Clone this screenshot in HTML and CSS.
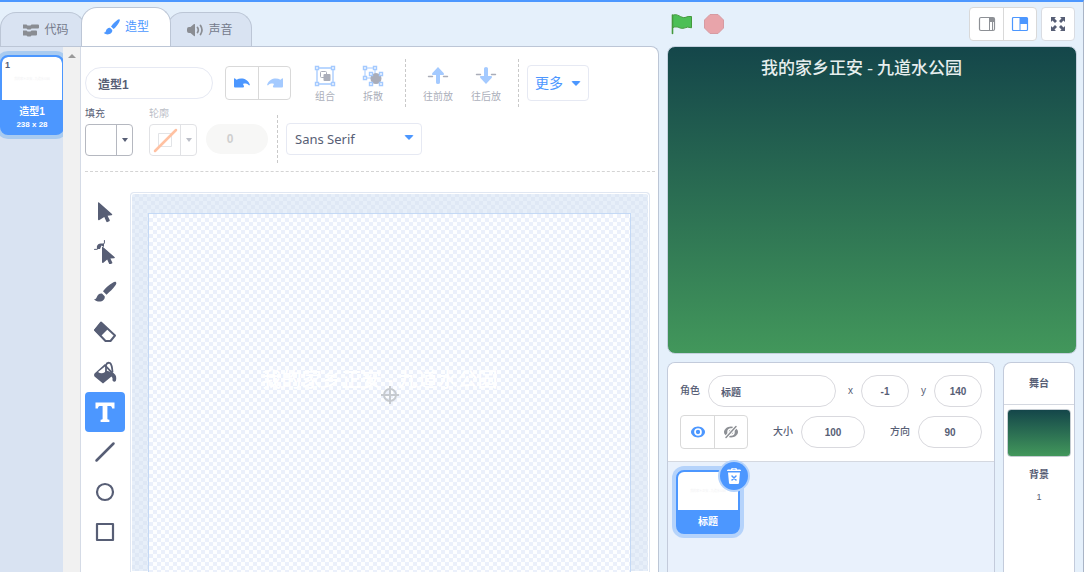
FILE: index.html
```html
<!DOCTYPE html>
<html lang="zh-CN">
<head>
<meta charset="utf-8">
<title>造型编辑器</title>
<link rel="stylesheet" href="styles.css">
</head>
<body>
<main class="app">
  <section class="editor">
    <nav class="tabs">
      <button class="tab tab-first"><svg width="18" height="16" viewBox="0 0 18 16"><path fill="#8a8d93" d="M1 2.500h3.500L5.500 3.500h3L9.500 2.500H16q1 0 1 1v2q0 1-1 1h-6.500L8.500 7.500h-3L4.500 6.500H1zM1 8.500h3.500l1 1h3l1-1H14q1 0 1 1V12.500q0 1-1 1h-4.500l-1 1h-3l-1-1H1z"/></svg>代码</button>
      <button class="tab tab-active"><svg width="18" height="18" viewBox="0 0 18 18"><path fill="#4c97ff" d="M16.400 1.300c.8.700.4 1.700-.3 2.900-1.500 2.700-3.400 5-5.500 6.900L8 8.500c2-2.700 4.200-5 6.700-6.800.6-.4 1.200-.8 1.700-.4zM7 9.800l2.300 2.300c.3 2-1.300 3.900-3.600 4.200-1.800.3-3.700-.2-5-1.500 1.500-.2 2-.7 2.300-2C3.500 11 5 9.500 7 9.800z"/></svg>造型</button>
      <button class="tab tab-last"><svg width="18" height="16" viewBox="0 0 18 16"><path fill="#8a8d93" d="M9 2.500v11q0 1-1 .4L4.500 11H3Q1 11 1 9V7q0-2 2-2h1.500L8 2.100q1-.6 1 .4z"/><path fill="none" stroke="#8a8d93" stroke-width="1.700" stroke-linecap="round" d="M11.500 5.500q1.600 2.500 0 5M14.500 3.500q3 4.500 0 9"/></svg>声音</button>
    </nav>
    <div class="workspace">
      <div class="costumes">
        <button class="costume">
          <span class="costume-thumb"><b>1</b><i>我的家乡正安 - 九道水公园</i></span>
          <span class="costume-name">造型1</span>
          <span class="costume-size">238 x 28</span>
        </button>
      </div>
      <div class="scroll"><span></span></div>
      <div class="paint">
        <div class="options">
          <div class="row row-top">
            <input class="name-input" type="text" value="造型1" aria-label="造型名称">
            <div class="pair undo-pair">
              <button aria-label="撤销"><svg width="18" height="14" viewBox="0 0 18 14"><path fill="#4c97ff" d="M1 3Q1 2 2 2.500l1.500 1.300C8 1.300 14.500 2.500 16.800 8.500q.3 1.200-.9.700C13.500 7.500 12 7.300 10 8l.8 1.800q.8 1.700-.7 1.700H2q-1 0-1-1z"/></svg></button>
              <button class="faded" aria-label="重做"><svg width="18" height="14" viewBox="0 0 18 14"><path fill="#4c97ff" d="M17 3q0-1-1-.5l-1.500 1.300C10 1.300 3.500 2.500 1.200 8.500q-.3 1.200.9.700C4.500 7.500 6 7.300 8 8l-.8 1.800q-.8 1.700.7 1.700H16q1 0 1-1z"/></svg></button>
            </div>
            <div class="actions group-actions">
              <button class="action"><svg width="22" height="22" viewBox="0 0 22 22"><path fill="none" stroke="#4c97ff" stroke-width="1.300" d="M3 3h16v16H3z"/><g fill="#fff" stroke="#4c97ff" stroke-width="1.400"><path d="M1.500 1.500h3v3h-3zM17.500 1.500h3v3h-3zM1.500 17.500h3v3h-3zM17.500 17.500h3v3h-3z"/></g><rect x="6.500" y="6.500" width="6" height="6" rx="1" fill="none" stroke="#575e75"/><rect x="9.500" y="9" width="7" height="7" rx="1" fill="#575e75"/></svg>组合</button>
              <button class="action"><svg width="22" height="22" viewBox="0 0 22 22"><path fill="none" stroke="#4c97ff" d="M3 3h10v10H3z"/><circle cx="14" cy="13.500" r="5.500" fill="#575e75"/><g fill="#fff" stroke="#4c97ff" stroke-width="1.400"><path d="M1.500 1.500h3v3h-3zM11.500 1.500h3v3h-3zM1.500 11.500h3v3h-3zM7.500 7.500h3v3h-3zM17.500 7.500h3v3h-3zM7.500 17.500h3v3h-3zM17.500 17.500h3v3h-3z"/></g></svg>拆散</button>
            </div>
            <div class="actions order-actions">
              <button class="action"><svg width="22" height="22" viewBox="0 0 22 22"><path stroke="#575e75" stroke-width="1.400" stroke-linecap="round" d="M1.500 11.500h4M16.500 11.500h4"/><path fill="#4c97ff" d="M11 2 16.800 8.300q.6 1.600-.5 1.700H13v7.500q0 1.500-2 1.500t-2-1.500V10H5.700q-1.100-.1-.5-1.700z"/></svg>往前放</button>
              <button class="action"><svg width="22" height="22" viewBox="0 0 22 22"><path stroke="#575e75" stroke-width="1.400" stroke-linecap="round" d="M1.500 9.500h4M16.500 9.500h4"/><path fill="#4c97ff" d="m11 19 5.800-6.300q.6-1.600-.5-1.700H13V3.500Q13 2 11 2T9 3.500V11H5.700q-1.100.1-.5 1.700z"/></svg>往后放</button>
            </div>
            <button class="more">更多<span class="caret"></span></button>
          </div>
          <div class="row row-bottom">
            <div class="swatch"><span>填充</span><button aria-label="填充"><i></i><b></b></button></div>
            <div class="swatch swatch-off"><span>轮廓</span><button aria-label="轮廓"><i><svg width="30" height="30" viewBox="0 0 30 30"><path fill="none" stroke="#b9bcc5" d="M8.500 8.500h13v13h-13z"/><path stroke="#ff661a" stroke-width="2.500" stroke-linecap="round" d="M5 26 26 5"/></svg></i><b></b></button></div>
            <input class="stroke-width" type="text" value="0" aria-label="轮廓宽度" disabled>
            <div class="font-box">
              <select class="font-select" aria-label="字体"><option>Sans Serif</option></select>
              <span class="caret"></span>
            </div>
          </div>
        </div>
        <div class="drawing">
          <div class="tools">
            <button class="tool" aria-label="选择"><svg viewBox="0 0 24 24"><path d="M5 3q0-1.200 1-.5L19 14q.8 1-.4 1.300l-4 .4 2.100 4.400q.3.800-.4 1.200l-1.900.8q-.8.200-1.100-.5l-2-4.600L6.400 20q-1 .6-1.400-.4z"/></svg></button>
            <button class="tool" aria-label="变形"><svg viewBox="0 0 24 24"><path d="M9 7.500q0-1.200 1-.5L21.500 17q.8 1-.4 1.200l-3.700.4 1.900 3.800q.3.700-.4 1.100l-1.800.7q-.7.200-1-.4l-1.900-4.200-3.800 3.100q-1 .6-1.400-.4z"/><path d="M4 9Q3 4 7.500 3.500H11V7L8.500 5.500 7 9z"/><path fill="none" stroke="#575e75" stroke-linecap="round" d="M1.500 9.500q3 .5 4.500-1.500M10.500 4.500q1.500-1 1-4"/></svg></button>
            <button class="tool" aria-label="画笔"><svg viewBox="0 0 24 24"><path d="M23 2.200c.8.800.2 2-.9 3.600-2.200 3-5 5.800-8.600 8.900l-3.500-3.500c2.700-3.300 5.900-6.200 9.700-8.400 1.300-.8 2.500-1.300 3.300-.6zM9 13.500l2.700 2.700c.5 3.200-2 5.200-5.300 5.300-2.100 0-4-.6-5.500-2.300 1.500.1 2.200-.5 2.800-2 1-2.700 2.500-4 5.300-3.700z"/></svg></button>
            <button class="tool" aria-label="橡皮擦"><svg viewBox="0 0 24 24"><path fill="none" stroke="#575e75" stroke-width="2" stroke-linejoin="round" d="M8 2.500 22 15.500 17.500 21h-5L2 10z"/><path d="M8 2 1 10l6.500 6.500L15 9z"/></svg></button>
            <button class="tool" aria-label="填充工具"><svg viewBox="0 0 24 24"><path d="M1.500 13.500 12 4l9 9.500q3 2 2 7-1.500 2.500-3.500 0 .5-3-1-4L10 23.500 1.500 16.500q-1-1.500 0-3z"/><path fill="#fff" d="m5 12 7-5.500 5.500 6Q14 9.500 12 12q-3.500 2.500-7 0z"/><path fill="none" stroke="#575e75" stroke-width="1.800" d="M13 12V5q1-3 4-2 2 1.500 2.500 9"/></svg></button>
            <button class="tool tool-on" aria-label="文本"><svg viewBox="0 0 24 24"><path d="M2.500 2.500h19V8.500h-2.300q-.3-2.500-1.700-2.500h-3.100v13q0 .8 2 .8V22H7.600v-2.200q2 0 2-.8V6H6.500Q5.100 6 4.800 8.500H2.500z"/></svg></button>
            <button class="tool" aria-label="线段"><svg viewBox="0 0 24 24"><path fill="none" stroke="#575e75" stroke-width="2.500" stroke-linecap="round" d="m3.500 20.500 17-17"/></svg></button>
            <button class="tool" aria-label="圆"><svg viewBox="0 0 24 24"><circle cx="12" cy="12" r="8" fill="none" stroke="#575e75" stroke-width="2.200"/></svg></button>
            <button class="tool" aria-label="矩形"><svg viewBox="0 0 24 24"><path fill="none" stroke="#575e75" stroke-width="2.200" stroke-linejoin="round" d="M4 4h16v16H4z"/></svg></button>
          </div>
          <div class="canvas">
            <div class="artboard">
              <span class="art-text">我的家乡正安 - 九道水公园</span>
              <svg class="center-mark" width="20" height="20" viewBox="0 0 20 20"><g fill="none" stroke="#c6cacf" stroke-width="2"><circle cx="10" cy="10" r="6"/><path d="M10 1v18M1 10h18"/></g></svg>
            </div>
          </div>
        </div>
      </div>
    </div>
  </section>

  <section class="side">
    <header class="controls">
      <button aria-label="运行"><svg width="22" height="22" viewBox="0 0 22 22"><path fill="#4cbf56" stroke="#45993d" d="M1.500 2.500C6-.5 10 5.500 14 4.500q3-1.500 6.500-1v11.300q-4-1.500-7.500.3c-4 1.500-6-3-11.500-.4z"/><path stroke="#45993d" stroke-width="1.600" stroke-linecap="round" d="M1.500 2v18.500"/></svg></button>
      <button aria-label="停止"><svg width="22" height="22" viewBox="0 0 22 22"><path fill="#e8a4aa" stroke="#d69ba2" d="M7 1.500h8L20.500 7v8L15 20.500H7L1.500 15V7z"/></svg></button>
      <div class="views">
        <div class="pair">
          <button aria-label="小舞台"><svg width="18" height="16" viewBox="0 0 18 16"><rect x="1.500" y="1.500" width="15" height="13" rx="1.500" fill="none" stroke="#8d9095" stroke-width="1.200"/><path fill="#8d9095" d="M11 2h5v4h-5z"/><path fill="none" stroke="#8d9095" d="M11.500 2v12M14.500 5v9"/></svg></button>
          <button aria-label="大舞台"><svg width="18" height="16" viewBox="0 0 18 16"><rect x="1.500" y="1.500" width="15" height="13" rx="1" fill="#fff" stroke="#4c97ff" stroke-width="1.200"/><path fill="#4c97ff" d="M9 2h7v6H9z"/><path fill="none" stroke="#4c97ff" d="M9 2v12"/></svg></button>
        </div>
        <button class="full" aria-label="全屏"><svg width="16" height="16" viewBox="0 0 16 16"><path fill="#575e75" d="M1 1h5L4.500 2.500 7 5 5 7 2.500 4.500 1 6zM15 1v5l-1.500-1.500L11 7 9 5l2.500-2.500L10 1zM1 15v-5l1.500 1.500L5 9l2 2-2.500 2.500L6 15zM15 15h-5l1.500-1.500L9 11l2-2 2.500 2.500L15 10z"/></svg></button>
      </div>
    </header>
    <div class="stage">我的家乡正安 - 九道水公园</div>
    <div class="targets">
      <div class="sprites">
        <div class="info">
          <div class="info-row">
            <div class="field"><label for="sn">角色</label><input id="sn" class="pill pill-name" value="标题"></div>
            <div class="field"><label for="sx">x</label><input id="sx" class="pill pill-small" value="-1"></div>
            <div class="field"><label for="sy">y</label><input id="sy" class="pill pill-small" value="140"></div>
          </div>
          <div class="info-row">
            <div class="pair">
              <button aria-label="显示"><svg width="16" height="14" viewBox="0 0 16 14"><path fill="#4c97ff" d="M8 1.500c4 0 7 3 7 5.500s-3 5.500-7 5.500S1 9.500 1 7s3-5.500 7-5.500z"/><circle cx="8" cy="7" r="3" fill="none" stroke="#fff" stroke-width="1.700"/></svg></button>
              <button aria-label="隐藏"><svg width="16" height="14" viewBox="0 0 16 14"><path fill="#8d9095" d="M8 1.500c4 0 7 3 7 5.500s-3 5.500-7 5.500S1 9.500 1 7s3-5.500 7-5.500z"/><circle cx="8" cy="7" r="3" fill="none" stroke="#fff" stroke-width="1.500"/><path stroke="#fff" stroke-width="3.500" d="M3 12.500 13 1.500"/><path stroke="#8d9095" stroke-width="1.500" stroke-linecap="round" d="M3 12.500 13 1.500"/></svg></button>
            </div>
            <div class="field"><label for="ss">大小</label><input id="ss" class="pill pill-mid" value="100"></div>
            <div class="field"><label for="sd">方向</label><input id="sd" class="pill pill-mid" value="90"></div>
          </div>
        </div>
        <div class="sprite-list">
          <div class="sprite">
            <span class="sprite-thumb">我的家乡正安 - 九道水公园</span>
            <span class="sprite-name">标题</span>
            <button class="delete" aria-label="删除"><svg width="16" height="18" viewBox="0 0 16 18"><path fill="#fff" d="M5 2.500q0-1.500 1-1.500h4q1 0 1 1.500h3q1 0 1 1.500H1q0-1.500 1-1.500zM2 5.500h12l-1 10.500q-.2 1-1 1H4q-.8 0-1-1zM6.500 2.500h3v-.7h-3z"/><path stroke="#4c97ff" stroke-width="1.500" stroke-linecap="round" d="m6 9 4 4m0-4-4 4"/></svg></button>
          </div>
        </div>
      </div>
      <aside class="backdrops">
        <h2>舞台</h2>
        <div class="backdrop-thumb"></div>
        <strong>背景</strong>
        <span>1</span>
      </aside>
    </div>
  </section>
</main>
</body>
</html>
```
FILE: styles.css
```css
* { box-sizing: border-box; }

body {
  margin: 0;
  overflow: hidden;
  background: #e5f0fb;
  color: #575e75;
  font: 10px/16px "Liberation Sans", "Noto Sans CJK SC", sans-serif;
}

button, input, select { font: inherit; color: inherit; }
button { padding: 0; border: 0; background: none; }
svg { display: block; flex: none; }

.app {
  display: flex;
  gap: 8px;
  height: 100vh;
  padding-right: 6px;
  border-top: 2px solid #4c97ff;
  border-right: 1px solid #a9b4c6;
}

.editor { flex: 1; min-width: 0; display: flex; flex-direction: column; }

.tabs { display: flex; align-items: flex-end; height: 44px; }
.tab {
  display: flex;
  align-items: center;
  justify-content: center;
  gap: 4px;
  width: 85px;
  height: 34px;
  border: 1px solid #bcc6d6;
  border-bottom: 0;
  border-radius: 16px 16px 0 0;
  background: #d9e3f2;
  color: #747a8b;
  font-size: 12px;
}
.tab-first { padding-left: 6px; }
.tab-active {
  z-index: 1;
  width: 90px;
  height: 39px;
  margin: 0 -4px;
  background: #fff;
  color: #4c97ff;
}

.workspace {
  flex: 1;
  min-height: 0;
  display: flex;
  overflow: hidden;
  border: 1px solid #bcc6d6;
  border-width: 1px 1px 0 0;
  border-radius: 0 8px 0 0;
  background: #fff;
}

.costumes { width: 63px; padding-top: 8px; overflow: hidden; background: #d9e3f2; }
.costume {
  display: flex;
  flex-direction: column;
  align-items: center;
  width: 64px;
  height: 80px;
  overflow: hidden;
  border: 2px solid #4c97ff;
  border-radius: 8px;
  background: #4c97ff;
  box-shadow: 0 0 0 4px #a9cbf0;
  color: #fff;
  font-weight: bold;
}
.costume-thumb {
  display: flex;
  flex-direction: column;
  align-items: center;
  width: 100%;
  height: 43px;
  border-radius: 6px 6px 0 0;
  background: #fff;
}
.costume-thumb b { align-self: flex-start; padding-left: 3px; color: #575e75; font-size: 9px; }
.costume-thumb i { color: #f2f2f4; font: 3px/12px "Noto Sans CJK SC", sans-serif; }
.costume-name { padding-top: 4px; }
.costume-size { font-size: 8px; line-height: 10px; }

.scroll { width: 17px; padding: 7px 5px; background: #f1f1f1; }
.scroll span {
  display: block;
  width: 0;
  border: 4px solid transparent;
  border-top: 0;
  border-bottom: 4px solid #9a9a9a;
}

.paint {
  flex: 1;
  min-width: 0;
  display: flex;
  flex-direction: column;
  gap: 20px;
  padding: 12px 3px 0 4px;
  border-left: 1px solid #d5dbe6;
}
.options { height: 113px; border-bottom: 1px dashed #d4d4d4; }
.row { display: flex; }
.row-top { align-items: center; height: 48px; }

.name-input {
  width: 128px;
  height: 32px;
  padding: 0 12px;
  border: 1px solid #e6e9f3;
  border-radius: 16px;
  font-size: 12px;
  font-weight: bold;
}
.pair { display: flex; height: 34px; border: 1px solid #d9d9d9; border-radius: 4px; background: #fff; }
.pair button { display: grid; place-items: center; width: 33px; }
.pair button + button { border-left: 1px solid #d9d9d9; }
.undo-pair { margin-left: 12px; }
.undo-pair button { width: 32px; }
.faded svg { opacity: .5; }

.actions { display: flex; height: 48px; border-right: 1px dashed #c9c9c9; }
.group-actions { padding: 0 8px 0 10px; }
.order-actions { padding: 0 8px; }
.action {
  display: flex;
  flex-direction: column;
  align-items: center;
  gap: 2px;
  width: 48px;
  padding-top: 6px;
  opacity: .5;
}
.more {
  display: flex;
  align-items: center;
  justify-content: center;
  gap: 8px;
  width: 62px;
  height: 36px;
  margin-left: 8px;
  border: 1px solid #e6e9f3;
  border-radius: 4px;
  color: #4c97ff;
  font-size: 14px;
}
.caret { border: 5px solid transparent; border-top-color: #4c97ff; border-bottom: 0; border-radius: 2px; }

.row-bottom { height: 57px; }
.swatch span { display: block; line-height: 14px; }
.swatch button {
  display: flex;
  width: 48px;
  height: 32px;
  margin-top: 3px;
  border: 1px solid #b5b8c0;
  border-radius: 4px;
}
.swatch i { width: 31px; height: 30px; border-right: 1px solid #b5b8c0; }
.swatch b {
  margin: 13px 0 0 5px;
  border: 3px solid transparent;
  border-top: 4px solid #575e75;
  border-bottom: 0;
}
.swatch-off { margin-left: 16px; opacity: .4; }
.stroke-width {
  width: 62px;
  height: 30px;
  margin: 17px 9px 0;
  padding: 0 14px 0 0;
  border: 0;
  border-radius: 16px;
  background: #f7f7f6;
  color: #cfcfcf;
  font-size: 12px;
  font-weight: bold;
  text-align: center;
}
.font-box {
  position: relative;
  height: 48px;
  margin-top: 8px;
  padding: 8px;
  border-left: 1px dashed #c9c9c9;
}
.font-select {
  width: 136px;
  height: 32px;
  padding: 0 8px;
  appearance: none;
  border: 1px solid #e6e9f3;
  border-radius: 4px;
  background: #fff;
  font: 13px "Noto Sans", sans-serif;
}
.font-box .caret { position: absolute; right: 16px; top: 20px; pointer-events: none; }

.drawing { flex: 1; min-height: 0; display: flex; gap: 5px; }
.tools { width: 40px; }
.tool { display: grid; place-items: center; width: 40px; height: 40px; border-radius: 4px; }
.tool svg { width: 24px; height: 24px; fill: #575e75; }
.tool-on { background: #4c97ff; }
.tool-on svg { fill: #fff; }

.canvas {
  flex: 1;
  min-width: 0;
  margin-right: 5px;
  padding: 20px 17px 0 16px;
  border: 1px solid #e0e7f2;
  border-bottom: 0;
  border-radius: 4px 4px 0 0;
  background: repeating-conic-gradient(#dfe8f5 0 25%, #e7eff9 0 50%) 0 0 / 8px 8px;
  box-shadow: inset 0 0 0 1px #fff;
}
.artboard {
  position: relative;
  aspect-ratio: 4 / 3;
  margin: 0 1px;
  border: 1px solid #c4d9f5;
  background: repeating-conic-gradient(#ebf0fb 0 25%, #fdfeff 0 50%) 0 0 / 8px 8px;
}
.art-text {
  position: absolute;
  inset: 43% 20px auto 0;
  color: #fff;
  font: 500 20px/20px "Noto Sans CJK SC", sans-serif;
  text-align: center;
}
.center-mark { position: absolute; left: calc(50% - 10px); top: calc(50% - 9px); }

.side { width: 410px; display: flex; flex-direction: column; }
.controls { display: flex; align-items: center; gap: 10px; height: 44px; padding: 0 2px 0 4px; }
.views { display: flex; gap: 4px; margin-left: auto; }
.full { display: grid; place-items: center; width: 34px; height: 34px; border: 1px solid #d9dce2; border-radius: 4px; background: #fff; }
.stage {
  height: 308px;
  flex: none;
  padding: 11px 21px 0 0;
  border: 1px solid #c4d0de;
  border-radius: 8px;
  background: linear-gradient(#14464a, #42975b);
  color: #e6eeee;
  font: 500 17px/22px "Liberation Serif", "Noto Sans CJK SC", serif;
  text-align: center;
}
.targets { flex: 1; min-height: 0; display: flex; gap: 8px; margin-top: 8px; padding-right: 2px; }
.sprites, .backdrops { border: 1px solid #c3cbdb; border-bottom: 0; border-radius: 8px 8px 0 0; }
.sprites { flex: 1; display: flex; flex-direction: column; overflow: hidden; background: #e9f1fc; }
.info { display: grid; gap: 8px; height: 99px; padding: 12px; border-bottom: 1px solid #d4d8e0; background: #fff; align-content: start; }
.info-row { display: flex; align-items: center; justify-content: space-between; }
.field { display: flex; align-items: center; gap: 8px; }
.field label { font-weight: 500; }
.pill { height: 32px; padding: 0 12px; border: 1px solid #d9d9de; border-radius: 16px; background: #fff; font-weight: bold; text-align: center; }
.pill-name { width: 128px; text-align: left; }
.pill-small { width: 48px; padding: 0 4px; }
.pill-mid { width: 64px; }
.sprite-list { flex: 1; padding: 8px; }
.sprite {
  position: relative;
  display: flex;
  flex-direction: column;
  align-items: center;
  width: 64px;
  height: 64px;
  border: 2px solid #4c97ff;
  border-radius: 8px;
  background: #4c97ff;
  box-shadow: 0 0 0 4px #b5d3fb;
  color: #fff;
}
.sprite-thumb {
  width: 100%;
  height: 38px;
  border-radius: 6px 6px 0 0;
  background: #fff;
  color: #f2f2f4;
  font-size: 3px;
  line-height: 38px;
  text-align: center;
}
.sprite-name { padding-top: 4px; font-weight: bold; }
.delete {
  position: absolute;
  top: -10px;
  right: -10px;
  display: grid;
  place-items: center;
  width: 28px;
  height: 28px;
  border-radius: 50%;
  background: #4c97ff;
  box-shadow: 0 0 0 2px #b5d3fb;
}
.backdrops { width: 72px; display: flex; flex-direction: column; align-items: center; background: #fff; }
.backdrops h2 {
  width: 100%;
  height: 42px;
  margin: 0 0 4px;
  border-bottom: 1px solid #d4d8e0;
  font-size: 10px;
  line-height: 42px;
  text-align: center;
}
.backdrop-thumb { width: 64px; height: 48px; border: 1px solid #c5ccd2; border-radius: 4px; background: linear-gradient(#14464a, #42975b); }
.backdrops strong { margin-top: 10px; }
.backdrops span { margin-top: 6px; font-size: 9px; }
```
